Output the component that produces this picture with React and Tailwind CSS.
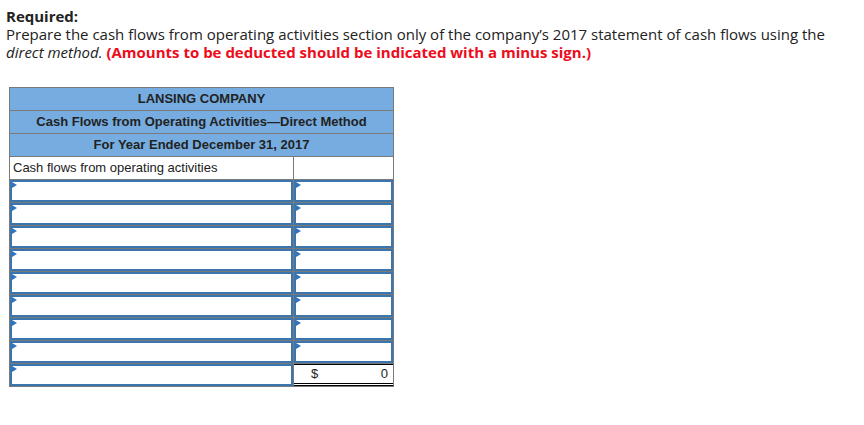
import React from "react";

const Tri = () => (
  <span className="absolute left-0 top-0 w-0 h-0 border-t-[3px] border-b-[3px] border-l-[5px] border-t-transparent border-b-transparent border-l-[#2f74c0]" />
);

function InputCell() {
  return (
    <td className="border border-[#7a7a7a] p-0 h-[23px]">
      <div className="relative h-[22px] border-2 border-[#3b75ad] bg-white">
        <Tri />
      </div>
    </td>
  );
}

export default function App() {
  const rows = Array.from({ length: 8 });
  return (
    <div className="w-[864px] h-[425px] bg-white" style={{ fontFamily: "'Open Sans', sans-serif" }}>
      <div className="pl-[6px] pt-[7px] text-[15px] leading-[18px] text-[#222]" style={{ fontFamily: "'Open Sans', sans-serif" }}>
        <div className="font-bold">Required:</div>
        <div>
          Prepare the cash flows from operating activities section only of the company’s 2017 statement of cash flows using the
        </div>
        <div>
          <span className="italic">direct method.</span>{" "}
          <span className="font-bold text-[#ee0b1b]">(Amounts to be deducted should be indicated with a minus sign.)</span>
        </div>
      </div>
      <div className="pl-[9px] pt-[26px]" style={{ fontFamily: "'Liberation Sans', Arial, sans-serif" }}>
        <table className="border-collapse w-[384px] table-fixed text-[13px] text-[#222]">
          <colgroup>
            <col className="w-[284px]" />
            <col className="w-[100px]" />
          </colgroup>
          <tbody>
            <tr>
              <td colSpan={2} className="h-[23px] border border-[#7a7a7a] bg-[#76acdf] text-center font-bold p-0">LANSING COMPANY</td>
            </tr>
            <tr>
              <td colSpan={2} className="h-[23px] border border-[#7a7a7a] bg-[#76acdf] text-center font-bold p-0">Cash Flows from Operating Activities—Direct Method</td>
            </tr>
            <tr>
              <td colSpan={2} className="h-[23px] border border-[#7a7a7a] bg-[#76acdf] text-center font-bold p-0">For Year Ended December 31, 2017</td>
            </tr>
            <tr>
              <td className="h-[23px] border border-[#7a7a7a] pl-[3px] py-0">Cash flows from operating activities</td>
              <td className="h-[23px] border border-[#7a7a7a] p-0"></td>
            </tr>
            {rows.map((_, i) => (
              <tr key={i}>
                <InputCell />
                <InputCell />
              </tr>
            ))}
            <tr>
              <InputCell />
              <td className="h-[23px] border border-[#7a7a7a] p-0">
                <div className="h-[22px] border-t border-t-black border-b-[3px] border-b-black border-double flex items-center justify-between pl-[17px] pr-[5px] bg-white">
                  <span>$</span>
                  <span>0</span>
                </div>
              </td>
            </tr>
          </tbody>
        </table>
      </div>
    </div>
  );
}
